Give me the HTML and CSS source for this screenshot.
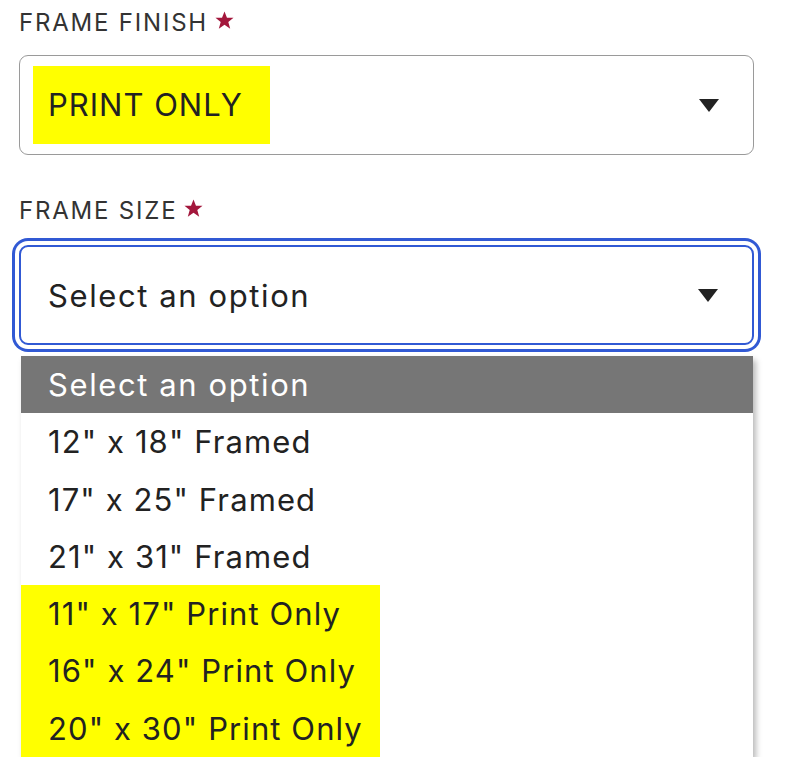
FILE: index.html
```html
<!DOCTYPE html>
<html>
<head>
<meta charset="utf-8">
<link rel="stylesheet" href="styles.css">
</head>
<body>
<div class="form">
  <div class="label">FRAME FINISH<svg class="req" viewBox="0 0 20 20" width="19" height="19"><polygon points="10,0.5 12.6,7 19.5,7.1 14,11.5 16,18.6 10,14.4 4,18.6 6,11.5 0.5,7.1 7.4,7" fill="#a3173c"/></svg></div>
  <div class="select select-finish">
    <span class="value hl">PRINT ONLY</span>
    <svg class="caret" viewBox="0 0 20 13" width="20" height="13"><polygon points="0,0 20,0 10,13" fill="#222"/></svg>
  </div>
  <div class="label label-size">FRAME SIZE<svg class="req" viewBox="0 0 20 20" width="19" height="19"><polygon points="10,0.5 12.6,7 19.5,7.1 14,11.5 16,18.6 10,14.4 4,18.6 6,11.5 0.5,7.1 7.4,7" fill="#a3173c"/></svg></div>
  <div class="select select-size">
    <span class="value">Select an option</span>
    <svg class="caret" viewBox="0 0 20 13" width="20" height="13"><polygon points="0,0 20,0 10,13" fill="#222"/></svg>
  </div>
  <div class="dropdown">
    <div class="opt opt-head">Select an option</div>
    <div class="opt">12" x 18" Framed</div>
    <div class="opt">17" x 25" Framed</div>
    <div class="opt">21" x 31" Framed</div>
    <div class="hl-group">
      <div class="opt">11" x 17" Print Only</div>
      <div class="opt">16" x 24" Print Only</div>
      <div class="opt">20" x 30" Print Only</div>
    </div>
  </div>
</div>
</body>
</html>
```
FILE: styles.css
```css
html, body {
  margin: 0;
  padding: 0;
  background: #fff;
}
body {
  font-family: Inter, "Noto Sans", sans-serif;
  color: #222;
}
.form {
  padding-left: 19px;
  width: 735px;
}
.label {
  margin-top: 9px;
  font-size: 24px;
  line-height: 28px;
  letter-spacing: 1.8px;
  color: #333;
  display: flex;
  align-items: center;
}
.label-size {
  margin-top: 42px;
}
.req {
  margin-left: 7px;
  margin-top: -5px;
}
.select {
  box-sizing: border-box;
  height: 100px;
  display: flex;
  align-items: center;
  border-radius: 9px;
  background: #fff;
}
.select-finish {
  margin-top: 18px;
  border: 1.5px solid #9a9a9a;
  padding-left: 13px;
}
.select-size {
  margin-top: 20px;
  border: 2px solid #3159d4;
  padding-left: 27px;
  box-shadow: 0 0 0 4px #fff, 0 0 0 7px #3159d4;
}
.value {
  font-size: 31px;
  letter-spacing: 1.6px;
}
.hl {
  background: #ffff00;
  height: 78px;
  line-height: 78px;
  padding: 0 27px 0 15px;
  letter-spacing: 1px;
}
.caret {
  margin-left: auto;
  margin-right: 34px;
}
.dropdown {
  margin-top: 11px;
  margin-left: 2px;
  width: 732px;
  background: #fff;
  box-shadow: 3px 4px 6px rgba(0, 0, 0, 0.28);
}
.opt {
  height: 57.3px;
  line-height: 57.3px;
  padding-left: 27px;
  font-size: 31px;
  letter-spacing: 1.1px;
  white-space: nowrap;
}
.opt-head {
  background: #767676;
  color: #fff;
  letter-spacing: 1.6px;
}
.hl-group {
  width: 359px;
  background: #ffff00;
}
```
